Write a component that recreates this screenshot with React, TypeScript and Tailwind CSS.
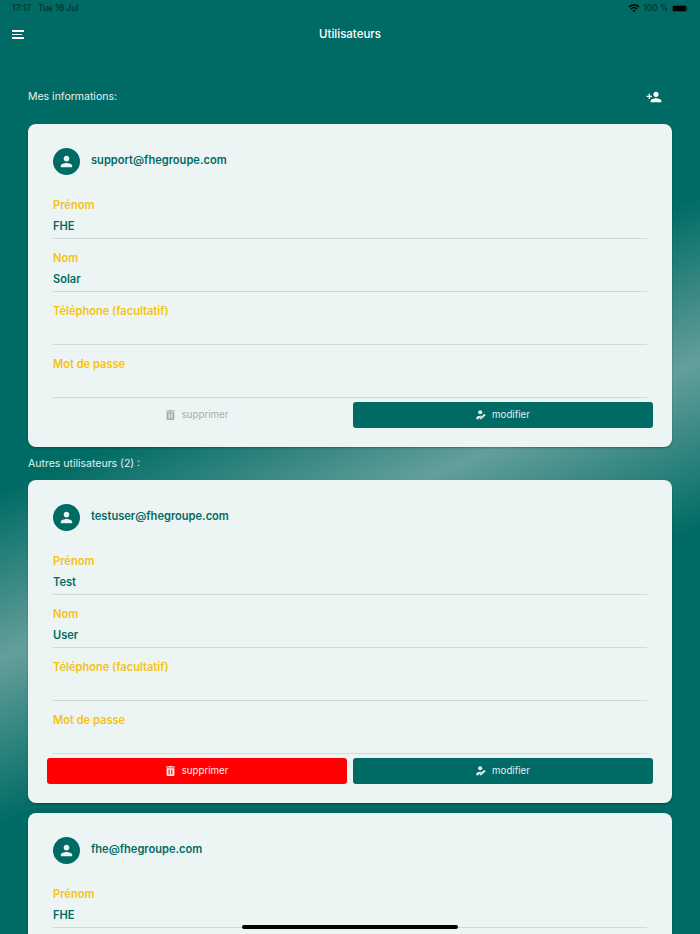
import { MdPerson, MdPersonAdd, MdWifi } from "react-icons/md";

function EditUser() {
  return (
    <svg width="10" height="10" viewBox="0 0 12 12" fill="currentColor">
      <circle cx="5" cy="2.7" r="2.5" />
      <path d="M0.3 11v-1.3C0.3 7.9 3 7 5 7c.5 0 1 .05 1.5.15L2.9 11H0.3z" />
      <path d="M4.6 11l.3-1.6L9.9 4.6l1.7 1.6L6.3 11H4.6z" />
    </svg>
  );
}

function Trash() {
  return (
    <svg width="9" height="10" viewBox="0 0 9 10" fill="currentColor">
      <path fillRule="evenodd" d="M3 0h3l.5.6H9v1H0v-1h2.5L3 0zM.6 2.2h7.8V9a1 1 0 0 1-1 1H1.6a1 1 0 0 1-1-1V2.2zM2.6 3.4v5h1.1v-5H2.6zm2.7 0v5h1.1v-5H5.3z" />
    </svg>
  );
}

function Field({ label, value }: { label: string; value?: string }) {
  return (
    <div className="flex flex-col">
      <div className="text-[11.1px] leading-[16px] font-semibold text-[#f5c211]">{label}</div>
      <div className="h-[25.5px] text-[11.1px] leading-[26px] font-semibold text-[#006b64] border-b border-[#d3d9d9]">{value}</div>
    </div>
  );
}

function ActionButton({ kind }: { kind: "off" | "danger" | "edit" }) {
  const tone =
    kind === "danger"
      ? "bg-[#ff0000] text-[#fdeeee]"
      : kind === "edit"
        ? "bg-[#006b64] text-[#e3efee]"
        : "text-[#a9abab]";
  return (
    <button className={"flex-1 h-[26px] rounded-[3px] flex items-center justify-center text-[9.7px] " + (kind === "edit" ? "gap-[6px] " : "gap-[7px] ") + tone}>
      {kind === "edit" ? <EditUser /> : <Trash />}
      <span className="pt-[1px]">{kind === "edit" ? "modifier" : "supprimer"}</span>
    </button>
  );
}

function Card({ email, prenom, nom, canDelete, clipped }: { email: string; prenom: string; nom?: string; canDelete?: boolean; clipped?: boolean }) {
  return (
    <div className="mx-[28px] bg-[#edf5f4] rounded-[8px] px-[25px] pt-[24px] pb-[19px] shadow-[0_1px_2px_rgba(0,0,0,0.3)]">
      <div className="flex items-start gap-[11px] h-[49px]">
        <div className="w-[27px] h-[27px] rounded-full bg-[#006b64] flex items-center justify-center text-[#edf5f4]">
          <MdPerson size={17} />
        </div>
        <div className="text-[11.1px] leading-[24px] font-semibold text-[#006b64]">{email}</div>
      </div>
      <div className="flex flex-col gap-[11.5px]">
        <Field label={"Prénom"} value={prenom} />
        {!clipped && (
          <>
            <Field label="Nom" value={nom} />
            <Field label={"Téléphone (facultatif)"} />
            <Field label="Mot de passe" />
          </>
        )}
      </div>
      {!clipped && (
        <div className="flex gap-[6px] mx-[-6px] mt-[4.5px]">
          <ActionButton kind={canDelete ? "danger" : "off"} />
          <ActionButton kind="edit" />
        </div>
      )}
    </div>
  );
}

export default function App() {
  return (
    <div
      className="relative w-[700px] h-[934px] overflow-hidden bg-[linear-gradient(157deg,#006b64_40%,#649f9b_53.5%,#006b64_67%)] text-white"
      style={{ fontFamily: "Inter, 'Noto Sans', sans-serif" }}
    >
      <div className="h-[16px] flex items-center justify-between px-[12px] text-[8.5px] text-[#062f2d]">
        <div className="flex gap-[7px] font-medium"><span>17:17</span><span>Tue 16 Jul</span></div>
        <div className="flex items-center gap-[3px] font-medium">
          <MdWifi size={12} className="text-black" />
          <span>100 %</span>
          <span className="flex items-center gap-[0.5px]">
            <span className="w-[15px] h-[7px] rounded-[2px] bg-black border border-[#0a4a46]" />
            <span className="w-[1px] h-[3px] bg-[#0a4a46]" />
          </span>
        </div>
      </div>
      <div className="h-[36px] relative flex items-center justify-center">
        <div className="absolute left-[12px] top-[14px] flex flex-col gap-[2px] items-start">
          <div className="w-[12px] h-[1.5px] bg-white" />
          <div className="w-[10px] h-[1.5px] bg-white" />
          <div className="w-[12px] h-[1.5px] bg-white" />
        </div>
        <span className="text-[11.5px] font-medium pt-[1px]">Utilisateurs</span>
      </div>
      <div className="mt-[30px] pl-[28px] pr-[38px] h-[42px] flex items-start justify-between">
        <span className="text-[10.5px] leading-[26px] mt-[1.5px] text-[#e6f1f0]">Mes informations:</span>
        <MdPersonAdd size={16} className="mt-[6.5px]" />
      </div>
      <Card email="support@fhegroupe.com" prenom="FHE" nom="Solar" />
      <div className="px-[28px] h-[33px] text-[10.5px] leading-[33px] text-[#e6f1f0]">Autres utilisateurs (2) :</div>
      <Card email="testuser@fhegroupe.com" prenom="Test" nom="User" canDelete />
      <div className="h-[10px]" />
      <Card email="fhe@fhegroupe.com" prenom="FHE" clipped />
      <div className="absolute left-[242px] bottom-[5px] w-[216px] h-[4px] rounded-full bg-black" />
    </div>
  );
}
